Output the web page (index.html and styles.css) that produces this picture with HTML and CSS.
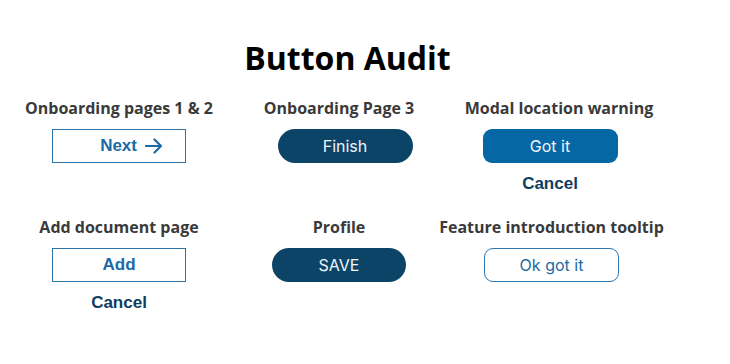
FILE: index.html
```html
<!DOCTYPE html>
<html lang="en">
<head>
<meta charset="utf-8">
<title>Button Audit</title>
<link rel="stylesheet" href="styles.css">
</head>
<body>
<main class="page">
  <h1 class="title">Button Audit</h1>
  <div class="grid">
    <section class="item">
      <h2 class="label">Onboarding pages 1 &amp; 2</h2>
      <button class="btn btn-outline btn-next">Next
        <svg class="arrow" width="18" height="16" viewBox="0 0 18 16" aria-hidden="true"><path d="M1 8H16M9.5 1.5L16 8L9.5 14.5" fill="none" stroke="currentColor" stroke-width="2.2" stroke-linecap="round" stroke-linejoin="round"/></svg>
      </button>
    </section>
    <section class="item">
      <h2 class="label">Onboarding Page 3</h2>
      <button class="btn btn-pill btn-finish">Finish</button>
    </section>
    <section class="item item-c3">
      <h2 class="label label-shift">Modal location warning</h2>
      <button class="btn btn-solid">Got it</button>
      <a class="link" href="#">Cancel</a>
    </section>
    <section class="item">
      <h2 class="label">Add document page</h2>
      <button class="btn btn-outline">Add</button>
      <a class="link" href="#">Cancel</a>
    </section>
    <section class="item">
      <h2 class="label">Profile</h2>
      <button class="btn btn-pill btn-save">SAVE</button>
    </section>
    <section class="item item-c3b">
      <h2 class="label">Feature introduction tooltip</h2>
      <button class="btn btn-ghost">Ok got it</button>
    </section>
  </div>
</main>
</body>
</html>
```
FILE: styles.css
```css
* { box-sizing: border-box; }
html, body { margin: 0; padding: 0; background: #fff; }
body { font-family: "Open Sans", sans-serif; }

.page {
  width: 730px;
  height: 364px;
  padding-top: 38px;
}

.title {
  margin: 0;
  font-family: "Open Sans", sans-serif;
  font-weight: 700;
  font-size: 32px;
  line-height: 40px;
  color: #000;
  text-align: center;
  padding-right: 35px;
}

.grid {
  display: grid;
  grid-template-columns: 220px 220px 220px;
  grid-template-rows: 119px auto;
  padding-left: 9px;
  margin-top: 20px;
}

.item {
  display: flex;
  flex-direction: column;
  align-items: center;
}

.item-c3 .btn,
.item-c3 .link { margin-right: 18px; }
.label-shift { margin-right: 3px; }
.item-c3b { padding-right: 15px; }

.label {
  margin: 0;
  font-family: "Open Sans", sans-serif;
  font-weight: 700;
  font-size: 16px;
  line-height: 20px;
  color: #3a3a3a;
  white-space: nowrap;
}

.btn {
  margin-top: 11px;
  width: 134px;
  height: 34px;
  display: flex;
  align-items: center;
  justify-content: center;
  font-size: 16px;
  cursor: pointer;
  padding: 0;
}

.btn-outline {
  background: #fff;
  border: 1.5px solid #2a74aa;
  border-radius: 0;
  color: #1a6aa4;
  font-family: "Liberation Sans", Arial, sans-serif;
  font-weight: 700;
  font-size: 17px;
}

.btn-next {
  justify-content: flex-end;
  padding-right: 22px;
  gap: 8px;
}

.arrow { display: block; }

.btn-pill {
  border: none;
  border-radius: 17px;
  background: #0c4468;
  color: #f2f5f8;
  font-family: Inter, sans-serif;
  font-weight: 400;
}

.btn-finish { margin-left: 12px; width: 135px; }
.btn-save { margin-left: 0; }

.btn-solid {
  border: none;
  border-radius: 9px;
  background: #0667a5;
  color: #f2f6fa;
  font-family: Inter, sans-serif;
  font-weight: 400;
  width: 135px;
}

.btn-ghost {
  background: #fff;
  border: 1.5px solid #2a78b0;
  border-radius: 9px;
  color: #1c6aa2;
  font-family: Inter, sans-serif;
  font-weight: 400;
  width: 135px;
}

.link {
  margin-top: 12px;
  font-family: "Liberation Sans", Arial, sans-serif;
  font-weight: 700;
  font-size: 17px;
  line-height: 18px;
  color: #0d3d61;
  text-decoration: none;
}
```
